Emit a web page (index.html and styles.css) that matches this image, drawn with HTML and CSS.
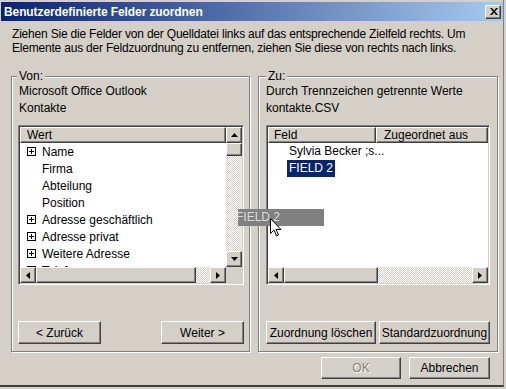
FILE: index.html
```html
<!DOCTYPE html>
<html lang="de">
<head>
    <meta charset="UTF-8">
    <meta name="viewport" content="width=device-width, initial-scale=1.0">
    <title>Benutzerdefinierte Felder zuordnen</title>
    <link rel="stylesheet" href="styles.css">
</head>
<body>
<div class="window">
    <div class="titlebar">
        <span class="title">Benutzerdefinierte Felder zuordnen</span>
        <span class="close-btn raised">
            <svg width="8" height="7" viewBox="0 0 8 7"><path d="M0 0h2l2 2.5L6 0h2L5 3.5 8 7H6L4 4.5 2 7H0l3-3.5z"/></svg>
        </span>
    </div>

    <p class="intro">Ziehen Sie die Felder von der Quelldatei links auf das entsprechende Zielfeld rechts. Um<br>Elemente aus der Feldzuordnung zu entfernen, ziehen Sie diese von rechts nach links.</p>

    <div class="groups">
        <div class="group group-from">
            <span class="group-label">Von:</span>
            <div class="source">Microsoft Office Outlook</div>
            <div class="source">Kontakte</div>

            <div class="listbox listbox-from">
                <div class="list-area">
                    <div class="list-header">
                        <div class="col raised">Wert</div>
                    </div>
                    <div class="tree-row"><span class="plus"></span>Name</div>
                    <div class="tree-row leaf">Firma</div>
                    <div class="tree-row leaf">Abteilung</div>
                    <div class="tree-row leaf">Position</div>
                    <div class="tree-row"><span class="plus"></span>Adresse geschäftlich</div>
                    <div class="tree-row"><span class="plus"></span>Adresse privat</div>
                    <div class="tree-row"><span class="plus"></span>Weitere Adresse</div>
                    <div class="tree-row"><span class="plus"></span>Telefonnummern</div>
                </div>
                <div class="vscroll">
                    <span class="arrow raised"><svg width="7" height="4"><path d="M3.5 0 7 4H0z"/></svg></span>
                    <span class="thumb-v raised"></span>
                    <span class="track"></span>
                    <span class="arrow raised"><svg width="7" height="4"><path d="M0 0h7L3.5 4z"/></svg></span>
                </div>
                <div class="hscroll">
                    <span class="arrow raised"><svg width="4" height="7"><path d="M4 0v7L0 3.5z"/></svg></span>
                    <span class="thumb-h raised" style="width: 160px"></span>
                    <span class="track"></span>
                    <span class="arrow raised"><svg width="4" height="7"><path d="M0 0l4 3.5L0 7z"/></svg></span>
                </div>
                <div class="corner"></div>
            </div>

            <div class="group-buttons">
                <span class="btn raised btn-nav">&lt; Zurück</span>
                <span class="btn raised btn-nav">Weiter &gt;</span>
            </div>
        </div>

        <div class="group group-to">
            <span class="group-label">Zu:</span>
            <div class="source">Durch Trennzeichen getrennte Werte</div>
            <div class="source">kontakte.CSV</div>

            <div class="listbox listbox-to">
                <div class="list-area">
                    <div class="list-header">
                        <div class="col col-field raised">Feld</div>
                        <div class="col col-mapped raised">Zugeordnet aus</div>
                    </div>
                    <div class="field-row"><span class="field-name">Sylvia Becker ;s...</span></div>
                    <div class="field-row"><span class="field-name selected">FIELD 2</span></div>
                </div>
                <div class="hscroll">
                    <span class="arrow raised"><svg width="4" height="7"><path d="M4 0v7L0 3.5z"/></svg></span>
                    <span class="thumb-h raised" style="width: 94px"></span>
                    <span class="track"></span>
                    <span class="arrow raised"><svg width="4" height="7"><path d="M0 0l4 3.5L0 7z"/></svg></span>
                </div>
            </div>

            <div class="group-buttons">
                <span class="btn raised btn-clear">Zuordnung löschen</span>
                <span class="btn raised btn-default">Standardzuordnung</span>
            </div>
        </div>
    </div>

    <div class="dialog-buttons">
        <span class="btn raised btn-ok disabled">OK</span>
        <span class="btn raised btn-cancel">Abbrechen</span>
    </div>

    <!-- drag feedback -->
    <div class="drag-ghost">FIELD 2</div>
    <svg class="cursor" width="12" height="19" viewBox="0 0 12 19"><path d="M.5.5v15l3.5-3.5 2.5 6 2-1-2.5-5.5H11z" fill="#fff" stroke="#000"/></svg>
</div>
</body>
</html>
```

FILE: styles.css
```css
body {
    margin: 0;
    background-color: #d4d0c8;
    font-family: "Liberation Sans", Arial, sans-serif;
    font-size: 12px;
    color: #000;
}
.window {
    position: relative;
    width: 504px;
    height: 387px;
    box-sizing: border-box;
    padding-top: 2px;
    border-right: 1px solid #808080;
    border-bottom: 2px solid #404040;
    overflow: hidden;
}
.raised {
    box-sizing: border-box;
    background-color: #d4d0c8;
    border: 1px solid;
    border-color: #fff #404040 #404040 #fff;
    box-shadow: inset -1px -1px #808080;
}

/* title bar */
.titlebar {
    display: flex;
    align-items: center;
    justify-content: space-between;
    height: 19px;
    margin-left: 1px;
    padding: 0 2px 0 3px;
    background: linear-gradient(to right, #0a246a, #a6caf0);
}
.title {
    color: #fff;
    font-weight: bold;
    font-size: 12px;
    letter-spacing: -0.1px;
}
.close-btn {
    display: flex;
    align-items: center;
    justify-content: center;
    width: 16px;
    height: 14px;
    padding-left: 1px;
}

.intro {
    margin: 6px 0 21px 12px;
    line-height: 14px;
    letter-spacing: -0.2px;
}

/* group boxes */
.groups {
    display: flex;
    gap: 8px;
    margin-left: 11px;
}
.group {
    display: flex;
    flex-direction: column;
    box-sizing: border-box;
    border: 1px solid #808080;
    box-shadow: inset 1px 1px #fff, 1px 1px #fff;
    padding: 0 5px 7px 6px;
}
.group-from {
    width: 239px;
}
.group-to {
    width: 240px;
    padding: 0 7px 7px 7px;
}
.group-label {
    align-self: flex-start;
    margin: -7px 0 0 -1px;
    padding: 0 2px;
    line-height: 13px;
    background-color: #d4d0c8;
}
.group-to .group-label {
    margin-left: 0;
}
.source {
    line-height: 17px;
}
.group-from .source {
    padding-left: 1px;
}

/* list boxes */
.listbox {
    display: grid;
    height: 160px;
    box-sizing: border-box;
    margin-top: 8px;
    border: 1px solid;
    border-color: #808080 #fff #fff #808080;
    padding: 1px;
    box-shadow: inset 1px 1px #404040, inset -1px -1px #d4d0c8;
}
.listbox-from {
    grid-template-columns: 1fr 16px;
    grid-template-rows: 1fr 16px;
}
.listbox-to {
    grid-template-columns: 1fr;
    grid-template-rows: 1fr 16px;
}
.list-area {
    background-color: #fff;
    overflow: hidden;
}
.list-header {
    display: flex;
    height: 16px;
}
.col {
    flex: 1;
    padding-left: 6px;
    line-height: 14px;
}
.col-field {
    flex: 0 0 108px;
    padding-left: 5px;
}
.col-mapped {
    padding-left: 7px;
}
.tree-row {
    display: flex;
    align-items: center;
    height: 17px;
    padding-left: 7px;
    white-space: nowrap;
}
.tree-row.leaf {
    padding-left: 22px;
}
.plus {
    width: 9px;
    height: 9px;
    box-sizing: border-box;
    margin-right: 6px;
    border: 1px solid #000;
    background:
        linear-gradient(#000, #000) center / 5px 1px no-repeat,
        linear-gradient(#000, #000) center / 1px 5px no-repeat;
}
.field-row {
    height: 17px;
    padding-left: 19px;
    line-height: 17px;
    white-space: nowrap;
}
.field-name {
    display: inline-block;
    padding: 0 2px;
}
.selected {
    background-color: #0a246a;
    color: #fff;
}

/* scroll bars */
.vscroll {
    display: flex;
    flex-direction: column;
}
.hscroll {
    display: flex;
}
.arrow {
    display: flex;
    align-items: center;
    justify-content: center;
    flex: 0 0 16px;
    height: 16px;
    width: 16px;
}
.thumb-v {
    flex: 0 0 13px;
}
.thumb-h {
    flex: none;
}
.track {
    flex: 1;
    background: repeating-conic-gradient(#fff 0 25%, #d4d0c8 0 50%) 0 0 / 2px 2px;
}
.corner {
    background-color: #d4d0c8;
}

/* buttons */
.btn {
    display: flex;
    align-items: center;
    justify-content: center;
    height: 23px;
    white-space: nowrap;
}
.group-buttons {
    display: flex;
    justify-content: space-between;
    margin-top: 36px;
}
.btn-nav {
    width: 83px;
}
.btn-clear {
    width: 110px;
}
.btn-default {
    width: 111px;
}
.dialog-buttons {
    display: flex;
    justify-content: flex-end;
    gap: 8px;
    margin: 5px 13px 0 0;
}
.btn-ok {
    width: 80px;
    height: 22px;
}
.btn-cancel {
    width: 81px;
    height: 22px;
}
.disabled {
    color: #808080;
    text-shadow: 1px 1px #fff;
}

/* drag feedback */
.drag-ghost {
    position: absolute;
    left: 238px;
    top: 209px;
    width: 86px;
    height: 17px;
    line-height: 17px;
    text-indent: -2px;
    overflow: hidden;
    white-space: nowrap;
    background-color: #808080;
    color: #dcdcdc;
}
.cursor {
    position: absolute;
    left: 270px;
    top: 218px;
}
```
